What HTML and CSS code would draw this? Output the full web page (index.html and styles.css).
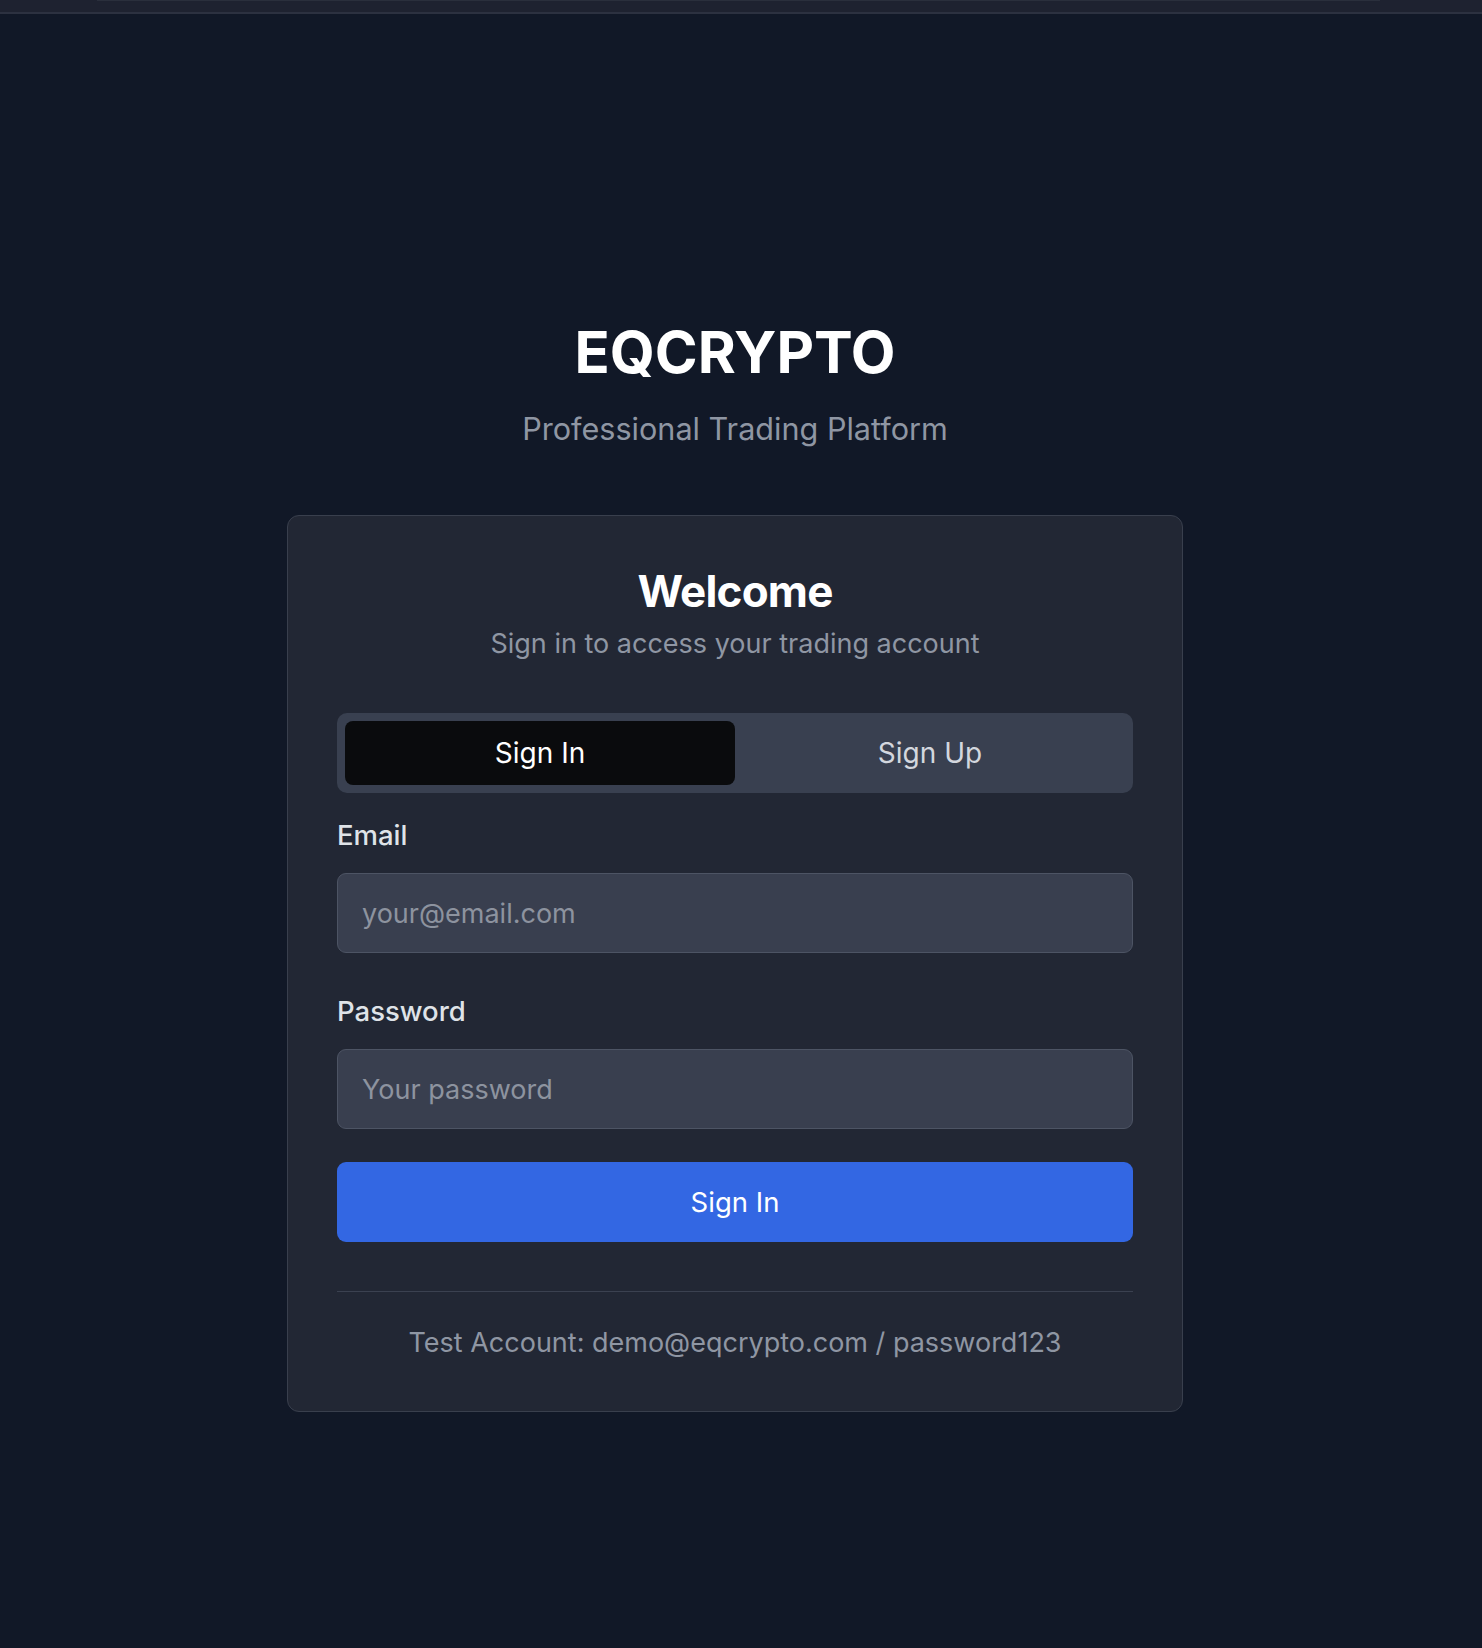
FILE: index.html
```html
<!DOCTYPE html>
<html lang="en">
<head>
<meta charset="utf-8">
<title>EQCRYPTO - Sign In</title>
<link rel="stylesheet" href="styles.css">
</head>
<body>
<header class="topbar"><div class="topbar-line"></div></header>
<main class="page">
  <h1 class="brand">EQCRYPTO</h1>
  <p class="tagline">Professional Trading Platform</p>
  <section class="card">
    <h2 class="card-title">Welcome</h2>
    <p class="card-sub">Sign in to access your trading account</p>
    <div class="tabs">
      <button class="tab tab-active" type="button">Sign In</button>
      <button class="tab" type="button">Sign Up</button>
    </div>
    <form class="form">
      <label class="label" for="email">Email</label>
      <input class="input" id="email" type="email" placeholder="your@email.com">
      <label class="label label-pw" for="password">Password</label>
      <input class="input" id="password" type="password" placeholder="Your password">
      <button class="submit" type="button">Sign In</button>
    </form>
    <hr class="divider">
    <p class="hint">Test Account: demo@eqcrypto.com / password123</p>
  </section>
</main>
</body>
</html>
```
FILE: styles.css
```css
* { box-sizing: border-box; }
html, body { margin: 0; padding: 0; }
body {
  background: #111827;
  font-family: Inter, "Noto Sans", sans-serif;
  color: #ffffff;
  min-height: 1648px;
}
.topbar {
  height: 14px;
  background: #1e2230;
  border-bottom: 2px solid #2c3140;
}
.topbar-line {
  height: 1px;
  margin: 0 102px 0 97px;
  background: #2a2f3c;
}
.page {
  padding: 303px 12px 0 0;
  display: flex;
  flex-direction: column;
  align-items: center;
}
.brand {
  margin: 0;
  font-size: 58px;
  line-height: 70px;
  font-weight: 700;
  color: #ffffff;
}
.tagline {
  margin: 23px 0 0;
  font-size: 30.6px;
  line-height: 37px;
  color: #8f96a3;
}
.card {
  margin-top: 68px;
  width: 896px;
  background: #222734;
  border: 1px solid #393f4d;
  border-radius: 12px;
  padding: 48px 49px 52px;
  display: flex;
  flex-direction: column;
}
.card-title {
  margin: 0;
  text-align: center;
  font-size: 44px;
  line-height: 54px;
  font-weight: 700;
  letter-spacing: -0.8px;
}
.card-sub {
  margin: 9px 0 0;
  text-align: center;
  font-size: 27px;
  line-height: 33px;
  color: #8f96a3;
}
.tabs {
  margin-top: 53px;
  display: grid;
  grid-template-columns: 1fr 1fr;
  padding: 8px;
  background: #394050;
  border-radius: 10px;
}
.tab {
  height: 64px;
  border: 0;
  background: transparent;
  border-radius: 8px;
  font-family: inherit;
  font-size: 28px;
  color: #d3d7de;
}
.tab-active {
  background: #0a0b0d;
  color: #ffffff;
}
.form {
  display: flex;
  flex-direction: column;
}
.label {
  margin-top: 26px;
  font-size: 27.5px;
  line-height: 32px;
  color: #dfe3e8;
  font-weight: 500;
}
.label-pw { margin-top: 42px; }
.input {
  margin-top: 22px;
  height: 80px;
  background: #393f4f;
  border: 1px solid #4d5464;
  border-radius: 9px;
  padding: 0 24px;
  font-family: inherit;
  font-size: 27px;
  color: #ffffff;
  outline: none;
}
.input::placeholder { color: #8d939f; }
.submit {
  margin-top: 33px;
  height: 80px;
  border: 0;
  border-radius: 9px;
  background: #3367e3;
  color: #ffffff;
  font-family: inherit;
  font-size: 27.5px;
}
.divider {
  margin: 49px 0 0;
  border: 0;
  height: 1px;
  background: #3b4150;
}
.hint {
  margin: 35px 0 0;
  text-align: center;
  font-size: 27px;
  line-height: 32px;
  color: #8f96a3;
}
```
